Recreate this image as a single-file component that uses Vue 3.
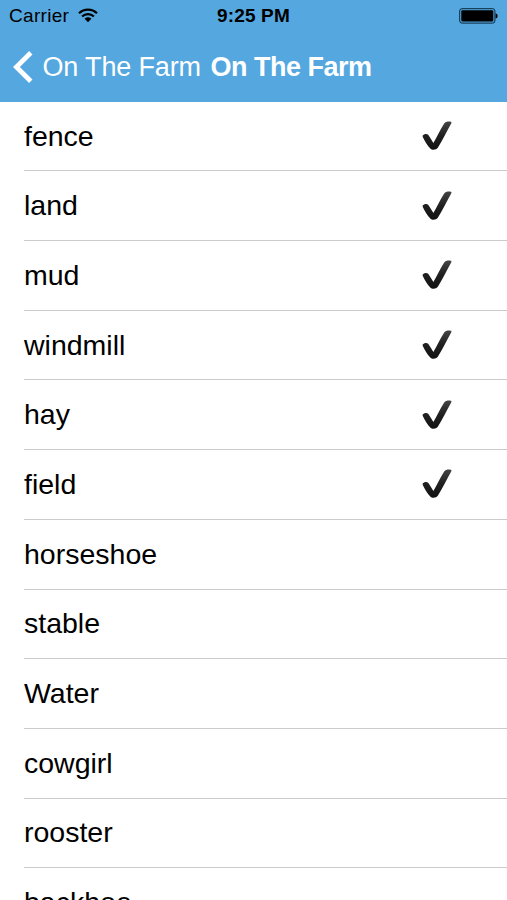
<script setup>
const words = [
  { name: 'fence', done: true },
  { name: 'land', done: true },
  { name: 'mud', done: true },
  { name: 'windmill', done: true },
  { name: 'hay', done: true },
  { name: 'field', done: true },
  { name: 'horseshoe', done: false },
  { name: 'stable', done: false },
  { name: 'Water', done: false },
  { name: 'cowgirl', done: false },
  { name: 'rooster', done: false },
  { name: 'backhoe', done: false },
]
</script>

<template>
  <div class="screen">
    <header class="top">
      <div class="status">
        <div class="carrier">
          <span>Carrier</span>
          <svg class="wifi" width="20" height="15" viewBox="0 0 20 15">
            <g fill="none" stroke="#000" stroke-width="2.3">
              <path d="M1 5.2C6 .3 14 .3 19 5.2" />
              <path d="M4.1 8.5C7.4 5.2 12.6 5.2 15.9 8.5" />
            </g>
            <path d="M6.6 10.8C8.6 8.8 11.4 8.8 13.4 10.8L10 14.2Z" />
          </svg>
        </div>
        <time class="clock">9:25 PM</time>
        <svg class="battery" width="39" height="16" viewBox="0 0 39 16">
          <rect x="0.7" y="0.7" width="35.2" height="14.4" rx="2.2" fill="none" stroke="#0a2a3e" stroke-width="1" />
          <rect x="2.3" y="2.2" width="32" height="11.4" rx="1" />
          <path d="M36.6 5.2C39.2 5.8 39.2 10 36.6 10.6Z" />
        </svg>
      </div>
      <nav class="nav">
        <svg class="chevron" width="20" height="32" viewBox="0 0 20 32">
          <path d="M17.8 1.7L3.4 16L17.8 30.3" fill="none" stroke="#fff" stroke-width="4.8" />
        </svg>
        <span class="back">On The Farm</span>
        <h1 class="title">On The Farm</h1>
      </nav>
    </header>
    <ul class="list">
      <li v-for="word in words" :key="word.name" class="row">
        <span>{{ word.name }}</span>
        <svg v-if="word.done" class="check" width="30" height="30" viewBox="0 0 30 30">
          <defs>
            <linearGradient id="ink" x1="0" y1="0" x2="0" y2="1">
              <stop offset="0" stop-color="#444" />
              <stop offset="0.5" stop-color="#202020" />
              <stop offset="1" stop-color="#111" />
            </linearGradient>
          </defs>
          <path fill="url(#ink)" d="M.7 14.6C1.6 12.9 5 12.2 6.2 13.8C8 16.4 9.6 19.3 11.4 22C15 16 18.2 8.7 22.2 2.6C23.5.8 26.4.3 28.8.8C29.7 1 29.6 1.7 29.2 2.4C24.5 10.5 20.5 19.3 15.8 26.8C14.5 28.9 10.3 29.5 8.5 27.7C5 24.2 2.7 19.6.8 15.9C.5 15.4.5 15 .7 14.6Z" />
        </svg>
      </li>
    </ul>
  </div>
</template>

<style>
body {
  background: #fff;
}
</style>

<style scoped>
.screen {
  height: 900px;
  overflow: hidden;
  background: #fff;
  color: #000;
  font-family: "Liberation Sans", Arial, sans-serif;
}
.top {
  height: 101.8px;
  background: #54a7df;
}
.status {
  display: grid;
  grid-template-columns: 1fr auto 1fr;
  align-items: center;
  height: 32px;
  padding: 0 9px;
  font-size: 19px;
  line-height: 32px;
}
.carrier {
  display: flex;
  align-items: center;
  gap: 9px;
  letter-spacing: 0.3px;
}
.wifi {
  margin-top: -1px;
}
.clock {
  font-weight: 700;
  letter-spacing: 0.15px;
}
.battery {
  justify-self: end;
}
.nav {
  display: flex;
  align-items: center;
  height: 70px;
  padding-left: 13px;
  color: #fff;
  font-size: 27px;
  line-height: 70px;
  white-space: nowrap;
}
.chevron {
  margin-right: 9.5px;
}
.back {
  letter-spacing: -0.15px;
}
.title {
  margin: 0 0 0 9.5px;
  font-size: 27px;
  font-weight: 700;
  letter-spacing: -0.5px;
}
.list {
  margin: 0;
  padding: 0 0 0 24px;
  list-style: none;
}
.row {
  box-sizing: border-box;
  display: flex;
  align-items: center;
  justify-content: space-between;
  height: 69.68px;
  padding-right: 55px;
  border-bottom: 1px solid #cbcbcd;
  font-size: 28.5px;
}
</style>
